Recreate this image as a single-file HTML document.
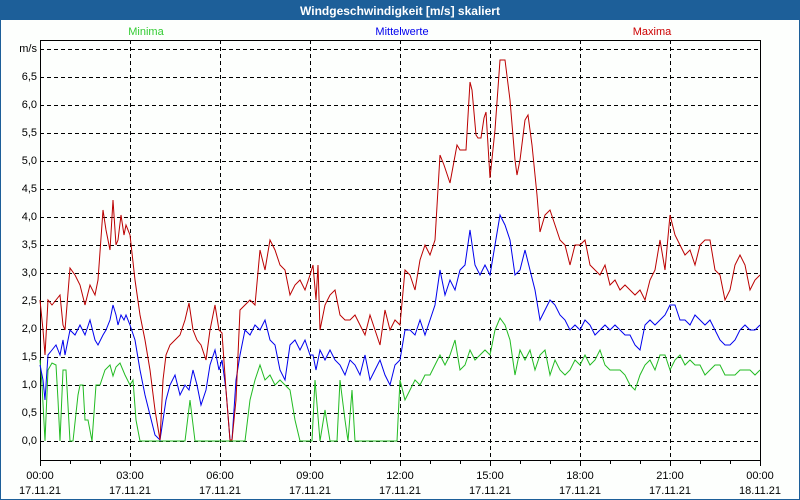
<!DOCTYPE html>
<html><head><meta charset="utf-8"><style>
html,body{margin:0;padding:0;background:#fff;}
svg{display:block;font-family:"Liberation Sans",sans-serif;}
</style></head><body>
<svg width="800" height="500" viewBox="0 0 800 500" xmlns="http://www.w3.org/2000/svg">
<rect x="0" y="0" width="800" height="500" fill="#1d5f99"/>
<rect x="1" y="20" width="798" height="479" fill="#fdfffd"/>
<text x="400" y="15" fill="#fff" font-size="12" font-weight="bold" text-anchor="middle">Windgeschwindigkeit [m/s] skaliert</text>
<text x="146" y="35" fill="#33cc33" font-size="11" text-anchor="middle">Minima</text>
<text x="402" y="35" fill="#0000ee" font-size="11" text-anchor="middle">Mittelwerte</text>
<text x="652" y="35" fill="#cc0000" font-size="11" text-anchor="middle">Maxima</text>
<g stroke="#000" stroke-width="1" stroke-dasharray="4,3" fill="none">
<path d="M40 441.5H760M40 413.5H760M40 385.5H760M40 357.5H760M40 329.5H760M40 301.5H760M40 273.5H760M40 245.5H760M40 217.5H760M40 189.5H760M40 161.5H760M40 133.5H760M40 105.5H760M40 77.5H760M40 49.5H760"/>
<path d="M130.5 40V460M220.5 40V460M310.5 40V460M400.5 40V460M490.5 40V460M580.5 40V460M670.5 40V460"/>
</g>
<g stroke="#000" stroke-width="1" fill="none">
<path d="M40.5 40V460.5H760M40 40.5H760.5V460"/>
<path d="M40.5 460V466M70.5 460V464M100.5 460V464M130.5 460V466M160.5 460V464M190.5 460V464M220.5 460V466M250.5 460V464M280.5 460V464M310.5 460V466M340.5 460V464M370.5 460V464M400.5 460V466M430.5 460V464M460.5 460V464M490.5 460V466M520.5 460V464M550.5 460V464M580.5 460V466M610.5 460V464M640.5 460V464M670.5 460V466M700.5 460V464M730.5 460V464M760.5 460V466"/>
</g>
<g font-size="11" fill="#000" text-anchor="end">
<text x="37" y="52">m/s</text>
<text x="37" y="80">6,5</text><text x="37" y="108">6,0</text><text x="37" y="136">5,5</text>
<text x="37" y="164">5,0</text><text x="37" y="192">4,5</text><text x="37" y="220">4,0</text>
<text x="37" y="248">3,5</text><text x="37" y="276">3,0</text><text x="37" y="304">2,5</text>
<text x="37" y="332">2,0</text><text x="37" y="360">1,5</text><text x="37" y="388">1,0</text>
<text x="37" y="416">0,5</text><text x="37" y="444">0,0</text>
</g>
<g font-size="11" fill="#000" text-anchor="middle">
<text x="40" y="479">00:00</text><text x="40" y="494">17.11.21</text>
<text x="130" y="479">03:00</text><text x="130" y="494">17.11.21</text>
<text x="220" y="479">06:00</text><text x="220" y="494">17.11.21</text>
<text x="310" y="479">09:00</text><text x="310" y="494">17.11.21</text>
<text x="400" y="479">12:00</text><text x="400" y="494">17.11.21</text>
<text x="490" y="479">15:00</text><text x="490" y="494">17.11.21</text>
<text x="580" y="479">18:00</text><text x="580" y="494">17.11.21</text>
<text x="670" y="479">21:00</text><text x="670" y="494">17.11.21</text>
<text x="760" y="479">00:00</text><text x="760" y="494">18.11.21</text>
</g>
<g fill="none" stroke-width="1">
<polyline stroke="#22bb22" points="40,360 42,385 45,441 48,370 52,363 56,365 58,400 60,441 63,370 66,370 70,441 73,441 78,395 80,385 83,385 85,420 88,420 92,441 96,385 100,385 105,370 110,365 113,376 116,367 120,363 125,375 130,385 133,380 136,420 140,441 185,441 190,400 195,441 245,441 250,400 255,380 260,365 265,380 270,375 275,385 280,380 285,385 290,390 295,420 300,441 312,441 315,380 320,441 325,410 330,441 337,441 340,380 345,420 348,441 352,390 355,441 397,441 400,380 405,400 410,390 415,380 420,385 425,375 430,375 435,365 440,355 445,365 450,355 455,340 460,370 465,365 470,350 475,360 480,355 485,350 490,355 495,330 500,318 505,325 510,340 515,375 520,350 525,360 530,350 535,370 540,355 545,350 550,375 555,360 560,370 565,375 570,370 575,360 580,365 585,355 590,365 595,360 600,350 605,365 610,370 615,370 620,370 625,375 630,385 635,390 640,375 645,365 650,360 655,370 660,355 665,355 670,370 675,360 680,355 685,365 690,360 695,365 700,365 705,375 710,370 715,365 720,365 725,375 730,375 735,375 740,370 745,370 750,370 755,375 760,370"/>
<polyline stroke="#0000ee" points="40,365 43,380 45,400 48,355 52,350 56,345 60,355 63,340 65,355 70,330 75,335 80,325 85,335 90,320 95,340 98,345 103,335 106,330 110,320 113,305 116,315 118,325 121,315 124,320 126,315 130,325 135,340 140,370 145,395 150,415 155,435 160,440 163,420 166,400 170,385 175,375 180,395 185,385 189,390 193,370 197,385 201,405 206,390 210,365 215,350 219,370 222,360 226,390 230,440 232,440 236,380 240,355 245,330 250,335 255,325 260,330 265,320 270,340 275,345 280,370 285,380 290,345 295,340 300,350 305,340 310,355 313,355 316,370 320,350 325,360 330,350 335,360 340,365 345,375 350,360 355,365 360,375 365,355 370,380 375,370 380,360 385,375 390,385 395,365 400,360 405,330 410,330 415,335 420,320 425,335 430,320 435,305 440,270 445,295 450,280 455,290 460,270 465,265 470,230 475,265 480,275 485,265 490,275 495,245 500,215 505,225 510,240 515,275 520,270 525,250 530,270 535,290 540,320 545,310 550,300 555,305 560,315 565,320 570,330 575,325 580,330 585,320 590,325 595,335 600,330 605,325 610,330 615,325 620,330 625,335 630,335 635,345 640,350 645,325 650,320 655,325 660,320 665,315 670,305 675,305 680,320 685,320 690,325 695,315 700,320 705,325 710,320 715,330 720,340 725,345 730,345 735,340 740,330 745,325 750,330 755,330 760,325"/>
<polyline stroke="#bb0000" points="40,300 43,330 45,355 48,300 52,305 56,300 60,295 63,325 65,330 70,268 75,275 80,285 85,305 90,285 95,295 98,280 103,210 106,230 110,250 113,200 116,245 118,240 121,215 124,235 126,225 130,235 135,280 140,315 145,340 150,370 155,410 160,440 163,380 166,355 170,345 175,340 180,335 185,320 189,303 193,330 197,340 201,345 206,360 210,330 215,305 219,330 222,333 226,390 230,440 232,440 236,400 240,310 245,305 250,300 255,305 260,250 265,270 270,240 275,250 280,265 285,270 290,295 295,285 300,280 305,290 310,275 313,265 316,300 318,265 320,330 325,305 330,295 335,290 340,315 345,320 350,320 355,315 360,325 365,335 370,315 375,330 380,345 385,310 390,330 395,320 400,325 405,270 410,275 415,290 420,260 425,245 430,255 435,240 440,155 444,165 450,183 457,145 460,150 466,150 470,82 472,90 476,135 478,138 481,138 484,118 486,112 490,178 495,130 500,60 505,60 510,100 515,160 517,175 520,160 525,120 528,115 532,145 537,195 540,232 545,215 550,210 555,225 560,240 565,245 570,265 575,245 580,245 585,240 590,265 595,270 600,275 605,265 610,285 615,280 620,290 625,285 630,290 635,295 640,290 645,300 650,280 655,270 660,240 665,270 670,215 675,235 680,245 685,255 690,250 695,265 700,245 705,240 710,240 715,270 720,275 725,300 730,290 735,265 740,255 745,265 750,290 755,280 760,275"/>
</g>
</svg>
</body></html>
